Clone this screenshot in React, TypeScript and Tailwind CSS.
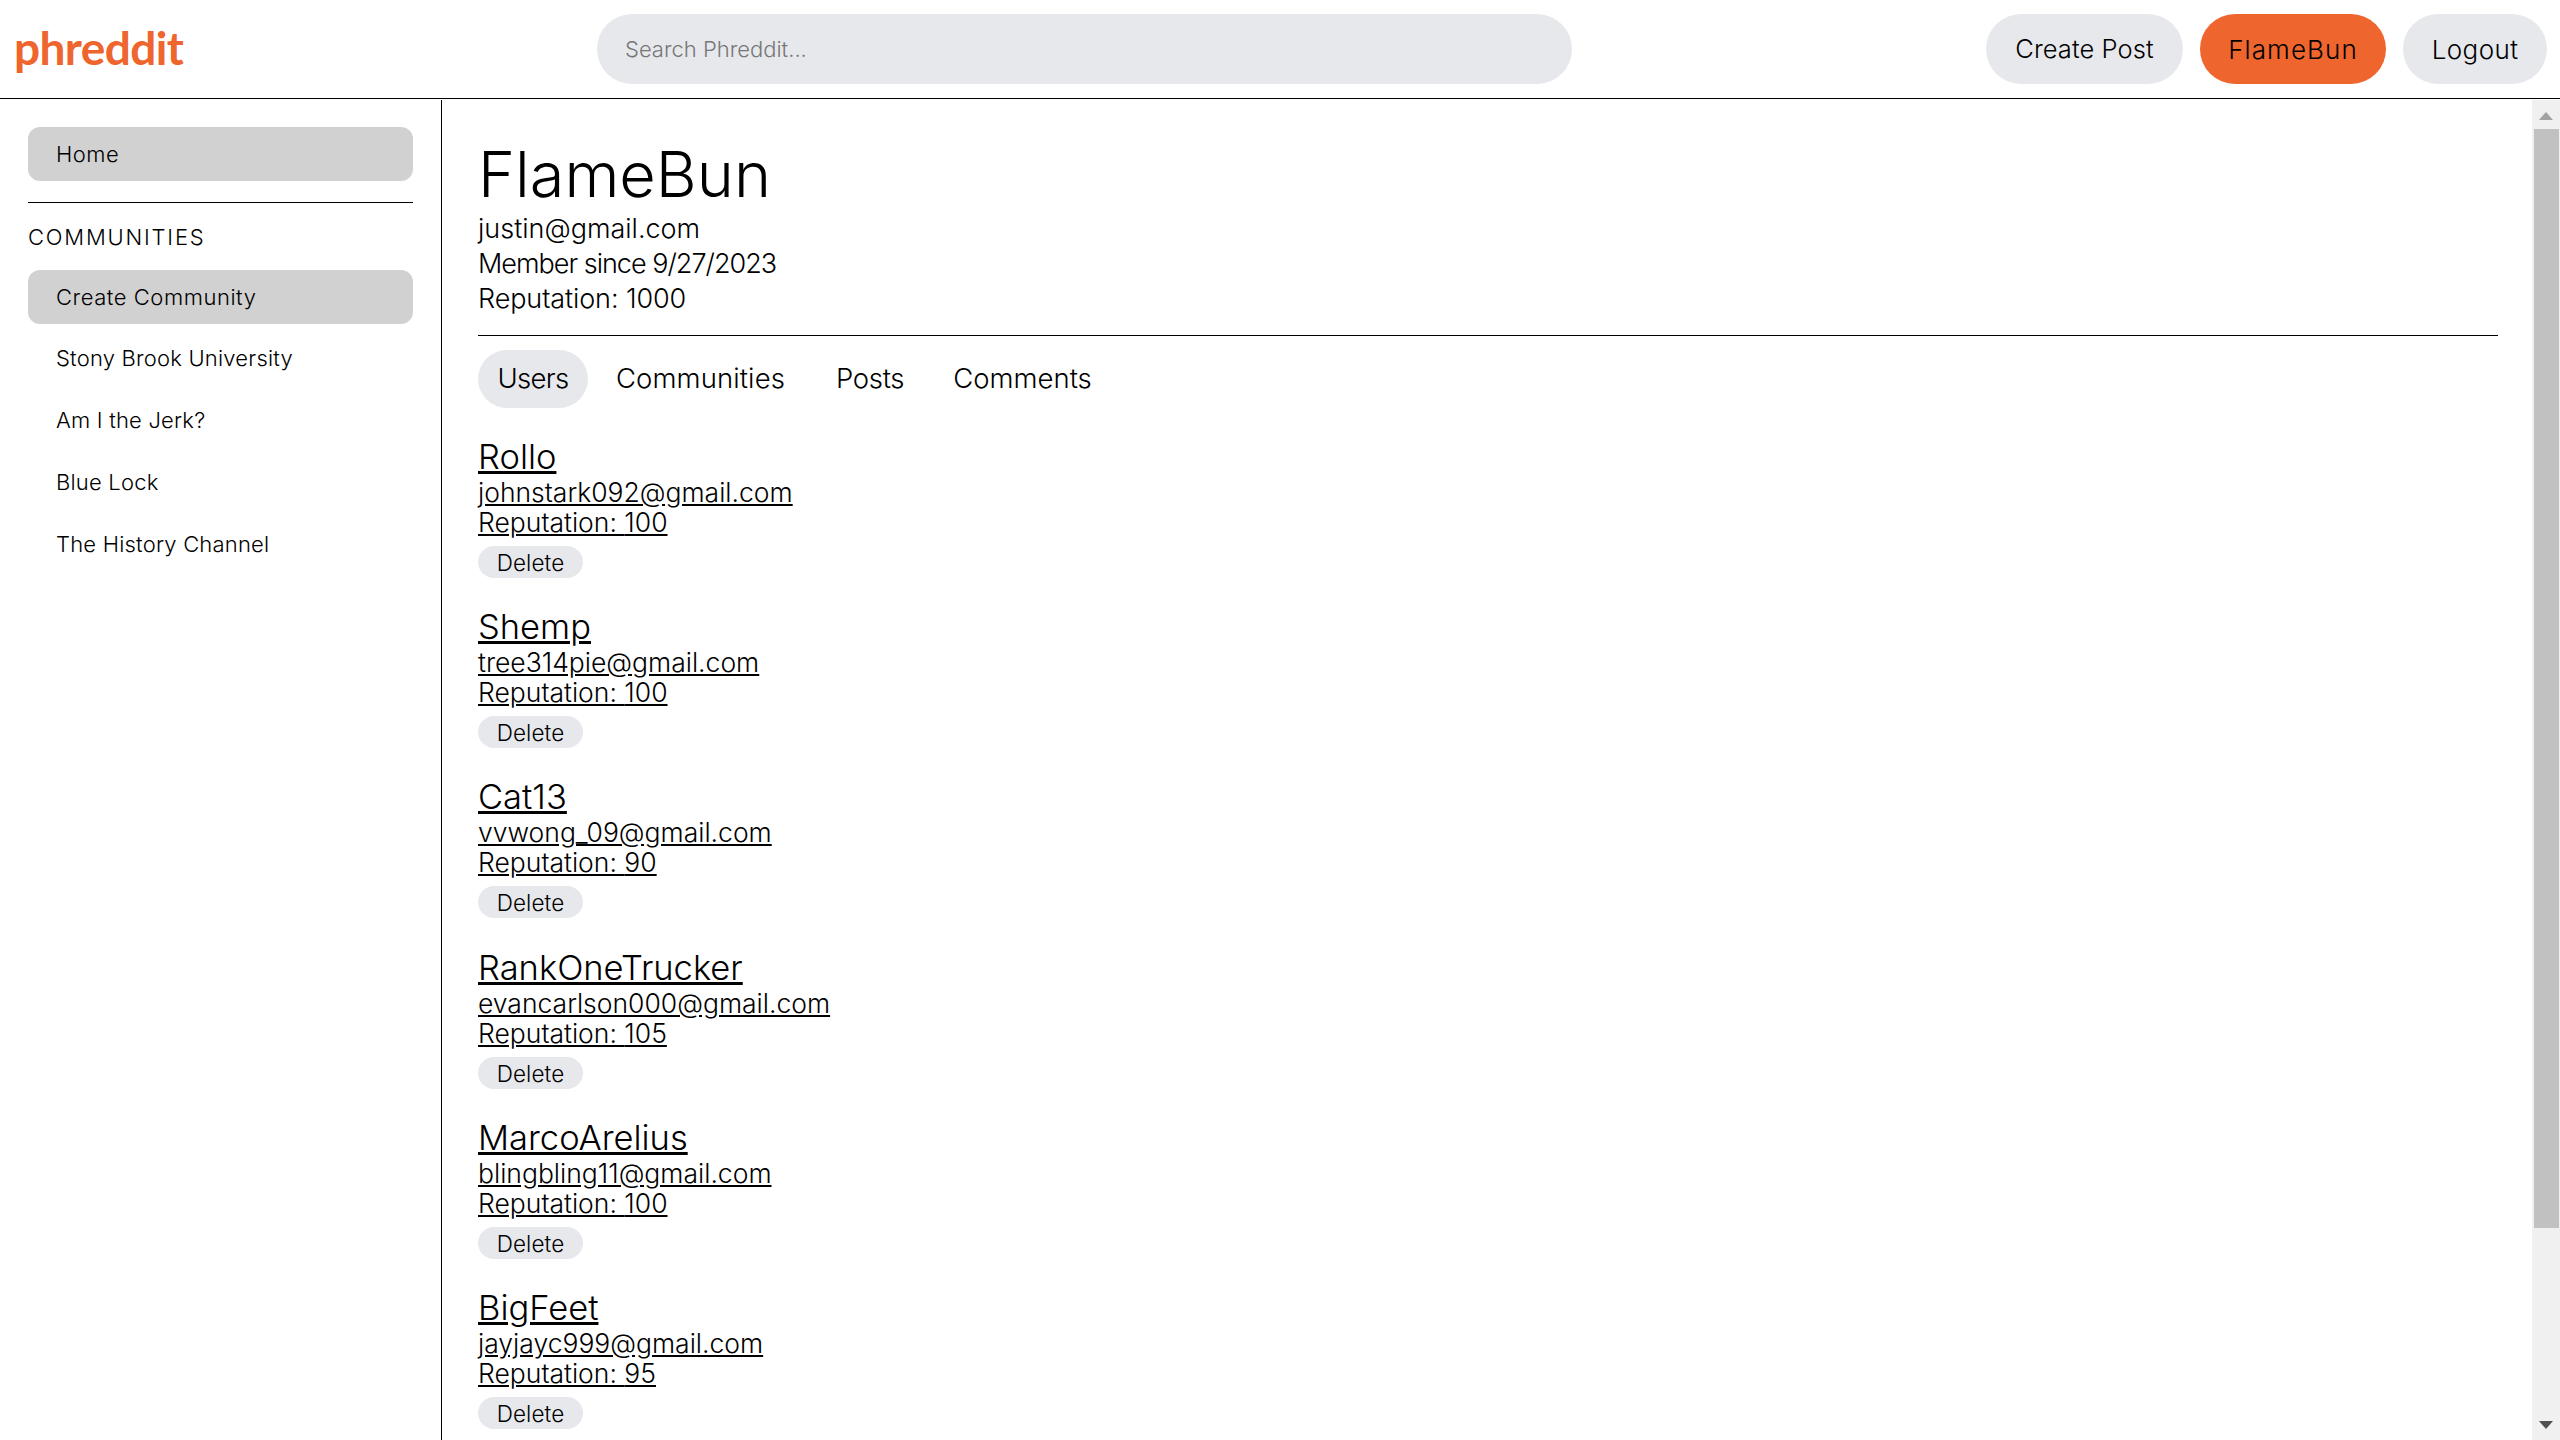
const users = [
  { name: "Rollo", email: "johnstark092@gmail.com", reputation: 100 },
  { name: "Shemp", email: "tree314pie@gmail.com", reputation: 100 },
  { name: "Cat13", email: "vvwong_09@gmail.com", reputation: 90 },
  { name: "RankOneTrucker", email: "evancarlson000@gmail.com", reputation: 105 },
  { name: "MarcoArelius", email: "blingbling11@gmail.com", reputation: 100 },
  { name: "BigFeet", email: "jayjayc999@gmail.com", reputation: 95 },
];

const communities = ["Stony Brook University", "Am I the Jerk?", "Blue Lock", "The History Channel"];

export default function App() {
  return (
    <div className="h-screen w-screen overflow-hidden bg-white text-black font-['Inter',sans-serif] font-light flex flex-col">
      {/* Header */}
      <header className="h-[99px] mb-[1px] shrink-0 border-b border-black flex items-center pl-[14px] pr-[13px]">
        <div className="w-[583px] shrink-0 font-['Lato',sans-serif] font-bold text-[46px] leading-none tracking-[-0.6px] text-[#ee652e] pb-[2px]">
          phreddit
        </div>
        <div className="w-[975px] h-[70px] shrink-0 rounded-full bg-[#e7e8ec] flex items-center pl-7 pt-[1px] text-[22px] text-[#777777]">
          Search Phreddit...
        </div>
        <div className="flex-1 flex justify-end gap-[17px]">
          <button className="w-[197px] h-[70px] rounded-full bg-[#e7e8ec] text-[25.5px] tracking-[0.1px]">Create Post</button>
          <button className="w-[186px] h-[70px] rounded-full bg-[#ee652e] text-[26px] tracking-[1.1px]">FlameBun</button>
          <button className="w-[144px] h-[70px] rounded-full bg-[#e7e8ec] text-[26px] tracking-[0.4px]">Logout</button>
        </div>
      </header>

      <div className="flex-1 flex min-h-0">
        {/* Sidebar */}
        <aside className="w-[442px] shrink-0 border-r border-black px-[28px] pt-[27px] font-[350]">
          <div className="h-[54px] rounded-xl bg-[#d1d1d1] flex items-center pl-7 text-[22px] tracking-[0.5px]">Home</div>
          <div className="mt-[21px] border-t border-black" />
          <div className="mt-[21px] text-[22px] leading-[26px] tracking-[1.8px] font-light">COMMUNITIES</div>
          <div className="mt-[20px] h-[54px] rounded-xl bg-[#d1d1d1] flex items-center pl-7 text-[22px] tracking-[0.55px]">
            Create Community
          </div>
          <div className="mt-[7px] flex flex-col gap-2">
            {communities.map((c) => (
              <div key={c} className="h-[54px] flex items-center pl-7 text-[22px] tracking-[0.2px]">{c}</div>
            ))}
          </div>
        </aside>

        {/* Main */}
        <main className="flex-1 min-w-0 overflow-hidden pl-[36px] pr-[34px] pt-[36px]">
          <h1 className="text-[63px] leading-[76px] font-light">FlameBun</h1>
          <div className="text-[27px] leading-[35px] -mt-[1px]">
            <div>justin@gmail.com</div>
            <div className="tracking-[-1px]">Member since 9/27/2023</div>
            <div className="tracking-[-0.1px]">Reputation: 1000</div>
          </div>
          <div className="mt-[19px] border-t border-black" />
          <div className="mt-[14px] flex items-center gap-[7px] text-[27.5px]">
            <div className="h-[58px] w-[110px] justify-center rounded-full bg-[#e7e8ec] flex items-center tracking-[-0.7px]">Users</div>
            <div className="h-[58px] px-[21px] flex items-center tracking-[0.1px]">Communities</div>
            <div className="h-[58px] pl-[23px] pr-[21px] flex items-center tracking-[-0.3px]">Posts</div>
            <div className="h-[58px] px-[21px] flex items-center">Comments</div>
          </div>
          <div className="mt-[29px] flex flex-col gap-[29.2px]">
            {users.map((u) => (
              <div key={u.name}>
                <div className="text-[34.5px] leading-[40px] underline">{u.name}</div>
                <div className="text-[26.5px] leading-[30px] underline">{u.email}</div>
                <div className="text-[26.5px] leading-[30px] underline">Reputation: {u.reputation}</div>
                <button className="mt-[9px] block h-[32px] w-[105px] rounded-full bg-[#e7e8ec] text-[22.5px] tracking-[0.1px]">Delete</button>
              </div>
            ))}
          </div>
        </main>

        {/* Scrollbar */}
        <div className="w-[28px] shrink-0 bg-[#f0f0f0] flex flex-col">
          <div className="h-[29px] shrink-0 flex items-center justify-center pt-[3px]">
            <svg width="14" height="8" viewBox="0 0 14 8"><path d="M7 0 14 8H0z" fill="#a3a3a3" /></svg>
          </div>
          <div className="h-[1099px] w-[25px] ml-[2px] shrink-0 bg-[#c1c1c1]" />
          <div className="flex-1" />
          <div className="h-[30px] shrink-0 flex items-center justify-center">
            <svg width="14" height="8" viewBox="0 0 14 8"><path d="M0 0H14L7 8z" fill="#505050" /></svg>
          </div>
        </div>
      </div>
    </div>
  );
}
